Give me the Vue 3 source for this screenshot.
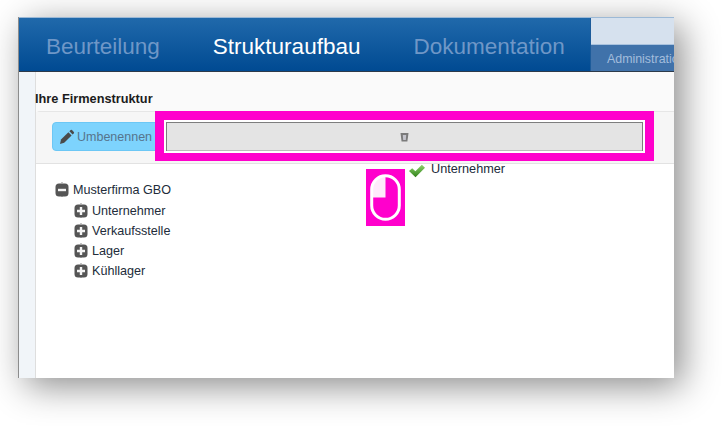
<script setup>
const tabs = [
  { label: 'Beurteilung', active: false },
  { label: 'Strukturaufbau', active: true },
  { label: 'Dokumentation', active: false },
]
const nodes = ['Unternehmer', 'Verkaufsstelle', 'Lager', 'Kühllager']
</script>

<template>
  <div class="page">
    <div class="window">
      <header class="topbar">
        <nav class="tabs">
          <span v-for="tab in tabs" :key="tab.label" class="tab" :class="{ active: tab.active }">{{ tab.label }}</span>
        </nav>
        <div class="side">
          <div class="side-top"></div>
          <div class="side-bottom"><span>Administration</span></div>
        </div>
      </header>

      <main class="content">
        <h2 class="title">Ihre Firmenstruktur</h2>
        <section class="panel">
          <div class="toolbar">
            <button class="rename">
              <svg width="16" height="16" viewBox="0 0 16 16">
                <path d="M1 15l1-4.4 7.4-7.4 3.2 3.2-7.4 7.4z" fill="#4a4a4a" />
                <path d="M10.4 2.3l1.2-1.2a1 1 0 0 1 1.4 0l1.8 1.8a1 1 0 0 1 0 1.4l-1.2 1.2z" fill="#4a4a4a" />
              </svg>
              Umbenennen
            </button>
          </div>
          <div class="tree">
            <div class="node root">
              <svg class="toggle" width="14" height="16" viewBox="0 0 14 16">
                <path d="M7 0v16" stroke="#8a8a8a" stroke-dasharray="1 1" />
                <rect x="0.5" y="1.5" width="13" height="13" rx="3.5" fill="#555" />
                <rect x="3" y="6.8" width="8" height="2.4" fill="#f4f4f4" />
              </svg>
              Musterfirma GBO
            </div>
            <div class="children">
              <div v-for="node in nodes" :key="node" class="node">
                <svg class="toggle" width="14" height="16" viewBox="0 0 14 16">
                  <path d="M7 0v16" stroke="#8a8a8a" stroke-dasharray="1 1" />
                  <rect x="0.5" y="1.5" width="13" height="13" rx="3.5" fill="#555" />
                  <path d="M3 8h8M7 4v8" stroke="#f4f4f4" stroke-width="2.4" />
                </svg>
                {{ node }}
              </div>
            </div>
          </div>
        </section>
      </main>

      <!-- Redaction and drag overlays sitting on top of the page -->
      <div class="highlight">
        <div class="drop-bar">
          <svg width="9" height="10" viewBox="0 0 9 10">
            <path d="M0.5 1h8L7.4 9.5H1.6z" fill="#7b7b7b" />
            <path d="M2.8 3h3.4L5.8 8H3.2z" fill="#c4c4cc" />
          </svg>
        </div>
      </div>
      <div class="mouse">
        <svg width="31" height="47" viewBox="0 0 31 47">
          <path d="M15.5 2v21.5H2V15.5A13.5 13.5 0 0 1 15.5 2z" fill="#ffeafb" />
          <rect x="1.7" y="1.7" width="27.6" height="43.6" rx="13.8" fill="none" stroke="#fff" stroke-width="3" />
        </svg>
      </div>
      <div class="dragged">
        <svg width="16" height="14" viewBox="0 0 16 13">
          <defs>
            <linearGradient id="tick" x1="0" y1="0" x2="0" y2="1">
              <stop offset="0" stop-color="#8ed36c" />
              <stop offset="1" stop-color="#2f8018" />
            </linearGradient>
          </defs>
          <path d="M0 6.5l3.2-2.8 3.2 3L12.8 0.3l3.2 2.9L6.5 12.8z" fill="url(#tick)" />
        </svg>
        <span>Unternehmer</span>
      </div>
    </div>
  </div>
</template>

<style>
html,
body {
  background: #fff;
}
</style>

<style scoped>
.page {
  position: relative;
  box-sizing: border-box;
  height: 426px;
  padding: 17px 0 0 18px;
  overflow: hidden;
}
.page::before {
  content: "";
  position: absolute;
  left: 18px;
  top: 17px;
  width: 656px;
  height: 361px;
  box-shadow: 8px 8px 34px rgba(0, 0, 0, 0.46);
}
.window {
  position: relative;
  box-sizing: border-box;
  width: 656px;
  height: 361px;
  overflow: hidden;
  background: #f1f5f9;
  border-left: 1px solid #8c8c8c;
  font-family: "Liberation Sans", Arial, sans-serif;
}
.topbar {
  display: flex;
  justify-content: space-between;
  box-sizing: border-box;
  height: 55px;
  background: linear-gradient(#2069ab, #004a92);
  border-top: 1px solid #9cb9d6;
  border-bottom: 1px solid #2d3a4a;
}
.tabs {
  display: flex;
  gap: 53px;
  padding: 15px 0 0 27px;
}
.tab {
  font-size: 22.5px;
  line-height: 27px;
  color: #6f97c7;
}
.tab.active {
  color: #fff;
}
.side {
  display: flex;
  flex-direction: column;
  width: 83px;
  border-left: 1px solid #1c5b9a;
}
.side-top {
  height: 26px;
  background: #d6e1ee;
}
.side-bottom {
  flex: 1;
  overflow: hidden;
  padding: 7px 0 0 16px;
  border-top: 1px solid #a9c2de;
  background: #4072aa;
  font-size: 12.4px;
  line-height: 14px;
  color: #a3bddc;
  white-space: nowrap;
}
.content {
  box-sizing: border-box;
  height: 306px;
  margin-left: 16px;
  padding-top: 19px;
  background: linear-gradient(#fafafa 0, #fafafa 92px, #fff 92px);
  border-left: 1px solid #dedede;
}
.title {
  margin: 0 0 5px -1px;
  font-size: 12.75px;
  line-height: 15px;
  font-weight: 700;
  color: #1c1c1c;
}
.panel {
  border-top: 1px solid #e6e6e6;
  border-top-left-radius: 4px;
}
.toolbar {
  box-sizing: border-box;
  height: 52px;
  padding: 10px 0 0 16px;
  background: #f6f6f6;
  border-bottom: 1px solid #e2e2e2;
}
.rename {
  display: flex;
  align-items: center;
  gap: 2px;
  box-sizing: border-box;
  width: 110px;
  height: 29px;
  padding: 0 0 0 6px;
  background: #7dd3fd;
  border: 1px solid #6cc7f5;
  border-radius: 4px;
  font-family: inherit;
  font-size: 12.5px;
  color: #56748c;
}
.tree {
  padding: 16.3px 0 0 19px;
  background: #fff;
  font-size: 12.6px;
  color: #222c3a;
}
.node {
  display: flex;
  align-items: center;
  gap: 4px;
  height: 20.2px;
}
.children {
  padding-left: 19px;
}
.highlight {
  position: absolute;
  left: 136px;
  top: 94px;
  box-sizing: border-box;
  width: 499px;
  height: 50px;
  padding: 9px;
  background: #ff00cc;
}
.drop-bar {
  box-sizing: border-box;
  display: flex;
  align-items: center;
  justify-content: center;
  height: 33px;
  background: #e4e4e4;
  border: 2px solid #fff;
  box-shadow: inset 1px 1px 0 #7d7d7d, inset -1px 0 0 #7d7d7d, inset 0 -1px 0 #bbb;
}
.mouse {
  position: absolute;
  left: 347px;
  top: 152px;
  display: flex;
  align-items: center;
  justify-content: center;
  width: 39px;
  height: 57px;
  background: #ff00cc;
}
.dragged {
  position: absolute;
  left: 390px;
  top: 144.5px;
  display: flex;
  align-items: flex-start;
  gap: 6px;
  font-size: 12.7px;
  color: #222c3a;
}
.dragged svg {
  margin-top: 2px;
}
</style>
